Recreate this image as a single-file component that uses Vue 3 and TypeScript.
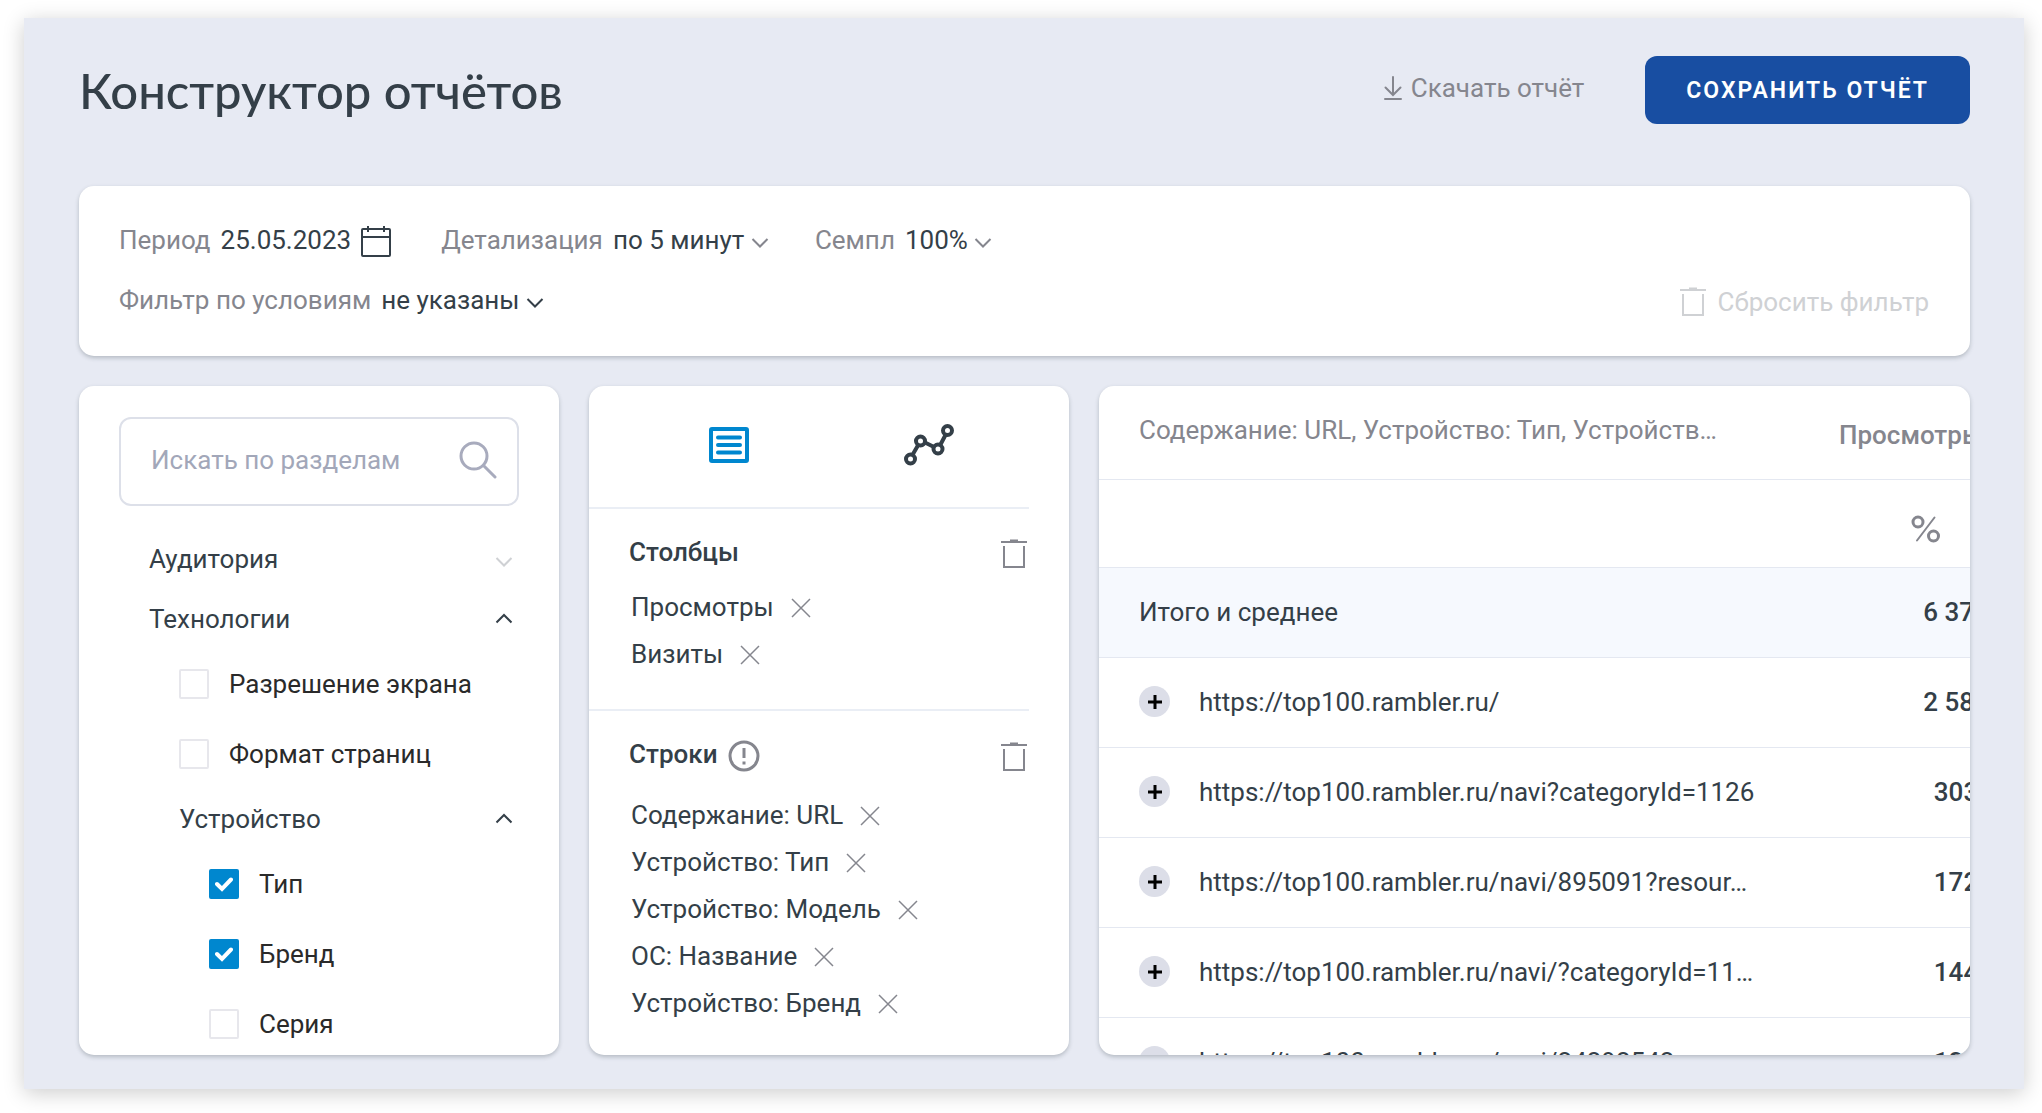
<script setup lang="ts">
import { ref } from 'vue'

interface TreeNode {
  kind: 'group' | 'check'
  label: string
  level: number
  open?: boolean
  checked?: boolean
}

interface ReportRow {
  url: string
  views: string
}

const tree = ref<TreeNode[]>([
  { kind: 'group', label: 'Аудитория', level: 0, open: false },
  { kind: 'group', label: 'Технологии', level: 0, open: true },
  { kind: 'check', label: 'Разрешение экрана', level: 1, checked: false },
  { kind: 'check', label: 'Формат страниц', level: 1, checked: false },
  { kind: 'group', label: 'Устройство', level: 1, open: true },
  { kind: 'check', label: 'Тип', level: 2, checked: true },
  { kind: 'check', label: 'Бренд', level: 2, checked: true },
  { kind: 'check', label: 'Серия', level: 2, checked: false },
])

const columns = ref<string[]>(['Просмотры', 'Визиты'])
const dimensions = ref<string[]>([
  'Содержание: URL',
  'Устройство: Тип',
  'Устройство: Модель',
  'ОС: Название',
  'Устройство: Бренд',
])

const rows: ReportRow[] = [
  { url: 'https://top100.rambler.ru/', views: '2 583' },
  { url: 'https://top100.rambler.ru/navi?categoryId=1126', views: '303' },
  { url: 'https://top100.rambler.ru/navi/895091?resour…', views: '172' },
  { url: 'https://top100.rambler.ru/navi/?categoryId=11…', views: '144' },
  { url: 'https://top100.rambler.ru/navi/24292542', views: '129' },
]

const query = ref('')
</script>

<template>
  <main class="board">
    <header class="top">
      <h1>Конструктор отчётов</h1>
      <div class="actions">
        <a class="download" href="#">
          <svg width="18" height="24" viewBox="0 0 18 24" fill="none" stroke="currentColor" stroke-width="2" stroke-linecap="round">
            <path d="M9 1v17M1.500 11.500L9 19l7.500-7.500M1 23h16" />
          </svg>
          <span>Скачать отчёт</span>
        </a>
        <button class="save" type="button">СОХРАНИТЬ ОТЧЁТ</button>
      </div>
    </header>

    <section class="card filters">
      <div class="filter-row">
        <div class="field">
          <span class="name">Период</span>
          <button class="date" type="button">
            25.05.2023
            <svg width="30" height="32" viewBox="0 0 30 32" fill="none" stroke="currentColor" stroke-width="2">
              <rect x="1" y="3" width="28" height="27" rx="1" />
              <path d="M1 11h28M7 0v6M23 0v6" />
            </svg>
          </button>
        </div>
        <label class="field">
          <span class="name">Детализация</span>
          <span class="pick">
            <select><option>по 5 минут</option></select>
            <svg class="muted" width="18" height="12" viewBox="0 0 18 12"><path d="M1.500 2L9 9.500 16.500 2" /></svg>
          </span>
        </label>
        <label class="field">
          <span class="name">Семпл</span>
          <span class="pick">
            <select><option>100%</option></select>
            <svg class="muted" width="18" height="12" viewBox="0 0 18 12"><path d="M1.500 2L9 9.500 16.500 2" /></svg>
          </span>
        </label>
      </div>
      <div class="filter-row">
        <label class="field">
          <span class="name">Фильтр по условиям</span>
          <span class="pick">
            <select><option>не указаны</option></select>
            <svg width="18" height="12" viewBox="0 0 18 12"><path d="M1.500 2L9 9.500 16.500 2" /></svg>
          </span>
        </label>
        <button class="reset" type="button" disabled>
          <svg width="26" height="30" viewBox="0 0 26 30" fill="none" stroke="currentColor" stroke-width="2">
            <path d="M0 3h26M9 1.500h8M3 7v21h20V7" />
          </svg>
          Сбросить фильтр
        </button>
      </div>
    </section>

    <div class="workspace">
      <aside class="card sections">
        <label class="search">
          <input v-model="query" type="text" placeholder="Искать по разделам" aria-label="Искать по разделам" />
          <svg width="38" height="38" viewBox="0 0 38 38" fill="none" stroke="currentColor" stroke-width="3" stroke-linecap="round">
            <circle cx="15" cy="15" r="13" />
            <path d="M24.500 24.500L36 36" />
          </svg>
        </label>
        <ul class="tree">
          <li v-for="node in tree" :key="node.label" :class="'level-' + node.level">
            <button v-if="node.kind === 'group'" class="group" type="button" @click="node.open = !node.open">
              {{ node.label }}
              <svg :class="node.open ? '' : 'pale'" width="18" height="12" viewBox="0 0 18 12">
                <path :d="node.open ? 'M1.5 9.5L9 2l7.5 7.5' : 'M1.5 2L9 9.5 16.5 2'" />
              </svg>
            </button>
            <label v-else class="check">
              <input v-model="node.checked" type="checkbox" />
              <svg class="tick" width="18" height="15" viewBox="0 0 18 15" fill="none">
                <path d="M2 7l5 5 9-9.500" stroke="#fff" stroke-width="4" stroke-linecap="round" />
              </svg>
              {{ node.label }}
            </label>
          </li>
        </ul>
      </aside>

      <section class="card config">
        <div class="tabs">
          <button type="button" aria-label="Таблица" class="active">
            <svg width="40" height="36" viewBox="0 0 40 36" fill="none" stroke="currentColor">
              <rect x="2" y="2" width="36" height="32" rx="1" stroke-width="4" />
              <path d="M9 10.500h22M9 18h22M9 25.500h22" stroke-width="4" stroke-linecap="round" />
            </svg>
          </button>
          <button type="button" aria-label="График">
            <svg width="50" height="42" viewBox="0 0 50 42" fill="none" stroke="currentColor" stroke-width="4">
              <path d="M9 30l5.500-9.500M21 18.500l8 4M36.500 20.500L41.500 11" />
              <circle cx="6.500" cy="35" r="4.500" />
              <circle cx="16.500" cy="17" r="4.500" />
              <circle cx="34" cy="25" r="4.500" />
              <circle cx="43.500" cy="6.500" r="4.500" />
            </svg>
          </button>
        </div>
        <div class="block">
          <div class="block-head">
            <h2>Столбцы</h2>
            <button type="button" class="trash" aria-label="Удалить столбцы" @click="columns = []">
              <svg width="26" height="30" viewBox="0 0 26 30" fill="none" stroke="currentColor" stroke-width="2">
                <path d="M0 3h26M9 1.500h8M3 7v21h20V7" />
              </svg>
            </button>
          </div>
          <ul class="chips">
            <li v-for="(item, i) in columns" :key="item">
              {{ item }}
              <button type="button" :aria-label="'Убрать ' + item" @click="columns.splice(i, 1)">
                <svg width="20" height="20" viewBox="0 0 20 20" fill="none" stroke="currentColor" stroke-width="1.500">
                  <path d="M1 1l18 18M19 1L1 19" />
                </svg>
              </button>
            </li>
          </ul>
        </div>
        <div class="block dimensions">
          <div class="block-head">
            <h2>Строки</h2>
            <svg class="info" width="32" height="32" viewBox="0 0 32 32" fill="none" stroke="currentColor" stroke-width="3">
              <circle cx="16" cy="16" r="14" />
              <path d="M16 8v10M16 21.500v3" />
            </svg>
            <button type="button" class="trash" aria-label="Удалить строки" @click="dimensions = []">
              <svg width="26" height="30" viewBox="0 0 26 30" fill="none" stroke="currentColor" stroke-width="2">
                <path d="M0 3h26M9 1.500h8M3 7v21h20V7" />
              </svg>
            </button>
          </div>
          <ul class="chips">
            <li v-for="(item, i) in dimensions" :key="item">
              {{ item }}
              <button type="button" :aria-label="'Убрать ' + item" @click="dimensions.splice(i, 1)">
                <svg width="20" height="20" viewBox="0 0 20 20" fill="none" stroke="currentColor" stroke-width="1.500">
                  <path d="M1 1l18 18M19 1L1 19" />
                </svg>
              </button>
            </li>
          </ul>
        </div>
      </section>

      <section class="card report">
        <table>
          <colgroup>
            <col class="col-url" />
            <col class="col-num" />
          </colgroup>
          <thead>
            <tr class="head">
              <th>Содержание: URL, Устройство: Тип, Устройств…</th>
              <th class="metric">Просмотры</th>
            </tr>
            <tr class="units">
              <td></td>
              <td>
                <svg width="29" height="28" viewBox="0 0 29 28" fill="none" stroke="currentColor" stroke-width="3" stroke-linecap="round">
                  <circle cx="7" cy="7" r="5" />
                  <circle cx="22.500" cy="21" r="5" />
                  <path d="M23.500 2.500L6 25.500" stroke-width="2" />
                </svg>
              </td>
            </tr>
          </thead>
          <tbody>
            <tr class="total">
              <td>Итого и среднее</td>
              <td class="num">6 374</td>
            </tr>
            <tr v-for="row in rows" :key="row.url">
              <td>
                <div class="url">
                  <button type="button" aria-label="Развернуть">
                    <svg width="16" height="16" viewBox="0 0 16 16" stroke="#000" stroke-width="3"><path d="M8 1v14M1 8h14" /></svg>
                  </button>
                  {{ row.url }}
                </div>
              </td>
              <td class="num">{{ row.views }}</td>
            </tr>
          </tbody>
        </table>
      </section>
    </div>
  </main>
</template>

<style>
body {
  margin: 0;
  background: #fff;
}
</style>

<style scoped>
* {
  box-sizing: border-box;
}

.board {
  display: flex;
  flex-direction: column;
  height: calc(100vh - 42px);
  margin: 18px 18px 24px 24px;
  padding: 38px 54px 34px 55px;
  background: #e7eaf3;
  box-shadow: 0 4px 20px rgba(0, 0, 0, 0.2);
  color: #343f48;
  font: 400 26px/30px Roboto, 'Liberation Sans', sans-serif;
}

button,
input,
select {
  margin: 0;
  padding: 0;
  border: 0;
  background: none;
  color: inherit;
  font: inherit;
}

button {
  display: flex;
  align-items: center;
}

svg {
  display: block;
  flex: none;
}

ul {
  margin: 0;
  padding: 0;
  list-style: none;
}

.top {
  display: flex;
  justify-content: space-between;
  align-items: flex-start;
  height: 130px;
  flex: none;
}

h1 {
  margin: 0;
  font: 500 49px/69px 'Lato Medium', Lato, 'Open Sans', sans-serif;
}

.actions {
  display: flex;
  align-items: center;
  gap: 61px;
}

.download {
  display: flex;
  align-items: center;
  gap: 9px;
  padding-bottom: 4px;
  color: #85868e;
  text-decoration: none;
}

.save {
  height: 68px;
  padding: 1px 41px 0;
  border-radius: 12px;
  background: #184ea2;
  color: #fff;
  font-size: 23px;
  font-weight: 600;
  letter-spacing: 2px;
}

.card {
  border-radius: 15px;
  background: #fff;
  box-shadow: 0 2px 4px rgba(52, 63, 72, 0.28);
}

.filters {
  display: flex;
  flex-direction: column;
  gap: 30px;
  flex: none;
  padding: 39px 40px 41px;
}

.filter-row {
  display: flex;
  align-items: center;
  gap: 46px;
  height: 30px;
}

.field {
  display: flex;
  align-items: center;
  gap: 10px;
}

.name {
  color: #85868e;
}

.date {
  gap: 10px;
  padding-right: 4px;
}

.date svg {
  margin-top: 3px;
}

.pick {
  display: flex;
  align-items: center;
  gap: 6px;
}

.pick svg {
  margin-top: 5px;
}

.pick svg,
.group svg {
  fill: none;
  stroke: #343f48;
  stroke-width: 2;
}

.pick .muted {
  stroke: #85868e;
}

select {
  appearance: none;
}

.reset {
  gap: 12px;
  margin: 3px 1px 0 auto;
  color: #cfd1d4;
}

.workspace {
  display: flex;
  flex: 1;
  gap: 30px;
  min-height: 0;
  margin-top: 30px;
}

.sections,
.config {
  flex: 0 0 480px;
  overflow: hidden;
}

.sections {
  padding: 31px 40px 0;
}

.search {
  display: flex;
  align-items: center;
  height: 89px;
  padding: 0 20px 4px 30px;
  border: 2px solid #dde0e9;
  border-radius: 12px;
  color: #a8abbd;
}

.search input {
  flex: 1;
  min-width: 0;
  outline: none;
}

.search input::placeholder {
  color: #a2a7b9;
  opacity: 1;
}

.tree {
  padding: 23px 6px 0 30px;
}

.level-1 {
  padding-left: 30px;
}

.level-2 {
  padding-left: 60px;
}

.group {
  justify-content: space-between;
  width: 100%;
  height: 60px;
}

.group .pale {
  margin-top: 5px;
  stroke: #cfd1d4;
}

.check {
  display: flex;
  align-items: center;
  height: 70px;
  color: #2a2a2a;
}

.check input {
  appearance: none;
  width: 30px;
  height: 30px;
  margin-right: 20px;
  border: 2px solid #e7e7ec;
  border-radius: 2px;
}

.check input:checked {
  border-color: #0087cf;
  background: #0087cf;
}

.tick {
  margin: 0 26px 0 -44px;
  visibility: hidden;
}

.check input:checked + .tick {
  visibility: visible;
}

.config {
  padding-right: 40px;
}

.tabs {
  display: flex;
  height: 123px;
  padding: 0 0 4px 40px;
  border-bottom: 2px solid #eaeef5;
}

.tabs button {
  flex: 1;
  justify-content: center;
}

.tabs .active {
  color: #0087cf;
}

.block {
  padding: 25px 0 32px 40px;
  border-bottom: 2px solid #eaeef5;
}

.block:last-child {
  border-bottom: 0;
}

.block-head {
  display: flex;
  align-items: center;
  gap: 10px;
  margin-bottom: 14px;
}

.dimensions .block-head {
  margin-bottom: 19px;
}

h2 {
  margin: 0;
  font-size: 26px;
  font-weight: 500;
  line-height: 30px;
}

.info,
.trash {
  color: #85868e;
}

.info {
  margin-top: 4px;
}

.trash {
  margin-left: auto;
  padding: 5px 2px 0 0;
}

.chips li {
  display: flex;
  align-items: center;
  gap: 17px;
  height: 47px;
  padding-left: 2px;
}

.chips button {
  padding-top: 3px;
  color: #85868e;
}

.report {
  flex: 1;
  min-width: 0;
  overflow: hidden;
}

table {
  width: 1014px;
  border-collapse: separate;
  border-spacing: 0;
  table-layout: fixed;
}

.col-url {
  width: 700px;
}

th,
td {
  height: 90px;
  padding: 0 40px 2px;
  border-bottom: 1px solid #e4e8f1;
  text-align: left;
  white-space: nowrap;
}

.head th {
  height: 94px;
  padding-bottom: 5px;
  color: #85868e;
  font-weight: 400;
}

.head .metric {
  padding: 4px 40px 0;
  font-weight: 500;
}

.units td {
  height: 88px;
  padding: 11px 0 0 112px;
  color: #85868e;
}

.total td {
  height: 90px;
  background: #f6f9fe;
}

td.num {
  padding: 0 0 2px;
  font-weight: 500;
  text-align: center;
}

.url {
  display: flex;
  align-items: center;
  gap: 29px;
}

.url button {
  justify-content: center;
  width: 31px;
  height: 31px;
  border-radius: 50%;
  background: #dcdee8;
}
</style>
